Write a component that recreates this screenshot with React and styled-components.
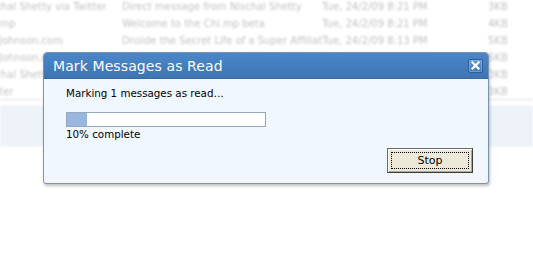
import styled, { createGlobalStyle } from 'styled-components';

const GlobalStyle = createGlobalStyle`
  html, body {
    margin: 0;
    padding: 0;
    background: #ffffff;
    overflow: hidden;
  }
  #root {
    width: 533px;
    height: 258px;
  }
`;

const messages = [
    { from: 'Nischal Shetty via Twitter', subject: 'Direct message from Nischal Shetty', date: 'Tue, 24/2/09 8:21 PM', size: '3KB' },
    { from: 'Chi.mp', subject: 'Welcome to the Chi.mp beta', date: 'Tue, 24/2/09 8:21 PM', size: '4KB' },
    { from: 'Ed. Johnson.com', subject: 'Dnside the Secret Life of a Super Affiliate', date: 'Tue, 24/2/09 8:13 PM', size: '5KB' },
    { from: 'Ed. Johnson.com', subject: 'Inside the Secret Life of a Super Affiliate', date: 'Tue, 24/2/09 8:10 PM', size: '5KB' },
    { from: 'Nischal Shetty via Twitter', subject: 'Direct message from Nischal Shetty', date: 'Tue, 24/2/09 8:02 PM', size: '3KB' },
    { from: 'Twitter', subject: 'You have a new follower on Twitter', date: 'Tue, 24/2/09 7:54 PM', size: '3KB' },
];

const App = () => {
    const progress = 10;
    return (
        <>
            <GlobalStyle />
            <Screen>
                <MailList>
                    {messages.map((m, i) => (
                        <MailRow key={i}>
                            <Cell>{m.from}</Cell>
                            <Cell>{m.subject}</Cell>
                            <Cell>{m.date}</Cell>
                            <Cell>{m.size}</Cell>
                        </MailRow>
                    ))}
                    <Divider />
                    <SelectedBand />
                </MailList>

                <Dialog>
                    <TitleBar>
                        <Title>Mark Messages as Read</Title>
                        <CloseButton aria-label="Close">
                            <svg width="9" height="9" viewBox="0 0 9 9">
                                <path d="M1.5 1.5 L7.5 7.5 M7.5 1.5 L1.5 7.5" stroke="#fff" strokeWidth="2.2" strokeLinecap="square" />
                            </svg>
                        </CloseButton>
                    </TitleBar>
                    <Body>
                        <Status>Marking 1 messages as read…</Status>
                        <ProgressTrack>
                            <ProgressFill style={{ width: `${progress}%` }} />
                        </ProgressTrack>
                        <Percent>{progress}% complete</Percent>
                        <Actions>
                            <StopButton>
                                <FocusRing>Stop</FocusRing>
                            </StopButton>
                        </Actions>
                    </Body>
                </Dialog>
            </Screen>
        </>
    );
};

//styled-components
const Screen = styled.div`
    position: relative;
    width: 533px;
    height: 258px;
    overflow: hidden;
    background: #fff;
`;

const MailList = styled.div`
    margin-top: -2px;
    display: flex;
    flex-direction: column;
    font-family: "DejaVu Sans", sans-serif;
    font-size: 10px;
    color: #c2c2c2;
    filter: blur(0.9px);
`;

const MailRow = styled.div`
    display: grid;
    grid-template-columns: 142px 200px 166px 60px;
    margin-left: -20px;
    height: 17px;
    align-items: center;
    white-space: nowrap;
`;

const Cell = styled.div`
    overflow: hidden;
    padding-right: 4px;
`;

const Divider = styled.div`
    height: 6px;
    border-top: 1px solid #e2e2e2;
    border-bottom: 1px solid #e8e8e8;
    margin-top: -1px;
`;

const SelectedBand = styled.div`
    height: 40px;
    background: #eef3fa;
`;

const Dialog = styled.div`
    position: absolute;
    left: 43px;
    top: 52px;
    width: 446px;
    height: 132px;
    box-sizing: border-box;
    border: 1px solid #7893b5;
    border-radius: 4px 4px 3px 3px;
    background: #f0f7fe;
    box-shadow: 1px 2px 3px rgba(0, 0, 0, 0.25);
    display: flex;
    flex-direction: column;
    overflow: hidden;
`;

const TitleBar = styled.div`
    height: 25px;
    flex: none;
    display: flex;
    align-items: center;
    justify-content: space-between;
    padding: 0 5px 0 9px;
    background: linear-gradient(#4a87c8, #3e74b4);
    border-bottom: 1px solid #3a6aa4;
`;

const Title = styled.span`
    font-family: "DejaVu Sans", sans-serif;
    font-size: 14px;
    color: #fff;
    letter-spacing: 0.1px;
`;

const CloseButton = styled.div`
    width: 13px;
    height: 12px;
    border: 1px solid #2f5d97;
    border-radius: 2px;
    background: linear-gradient(#5d95d3, #4279bb);
    display: flex;
    align-items: center;
    justify-content: center;
    box-shadow: inset 0 0 0 1px rgba(255, 255, 255, 0.25);
`;

const Body = styled.div`
    flex: 1;
    padding: 7px 15px 0 21px;
    display: flex;
    flex-direction: column;
    font-family: "DejaVu Sans", sans-serif;
    font-size: 10.3px;
    color: #000;
`;

const Status = styled.div`
    line-height: 14px;
    margin-left: 1px;
`;

const ProgressTrack = styled.div`
    margin-top: 12px;
    margin-left: 1px;
    width: 200px;
    height: 15px;
    box-sizing: border-box;
    border: 1px solid #94a9bf;
    background: #fff;
`;

const ProgressFill = styled.div`
    height: 100%;
    background: #98b6de;
`;

const Percent = styled.div`
    margin-top: 1px;
    margin-left: 1px;
    line-height: 13px;
`;

const Actions = styled.div`
    display: flex;
    justify-content: flex-end;
    margin-top: 7px;
`;

const StopButton = styled.div`
    width: 86px;
    height: 25px;
    box-sizing: border-box;
    border: 1px solid #6c6b62;
    border-right-color: #3e3d38;
    border-bottom-color: #3e3d38;
    background: #ece9d8;
    box-shadow: inset 1px 1px 0 #fff, inset -1px -1px 0 #aca899;
    padding: 3px;
`;

const FocusRing = styled.div`
    height: 100%;
    box-sizing: border-box;
    border: 1px dotted #000;
    display: flex;
    align-items: center;
    justify-content: center;
    font-family: "DejaVu Sans", sans-serif;
    font-size: 11px;
    color: #000;
`;

export default App;
